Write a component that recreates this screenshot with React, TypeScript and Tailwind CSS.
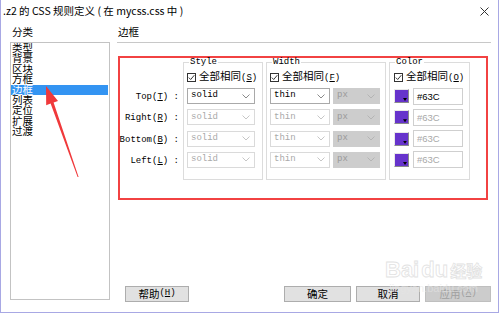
const MONO = "font-['Liberation_Mono','Noto_Sans_CJK_SC',monospace]";

const categories = ["类型", "背景", "区块", "方框", "边框", "列表", "定位", "扩展", "过渡"];

const sides = [
  { name: "Top", key: "T", on: true },
  { name: "Right", key: "R", on: false },
  { name: "Bottom", key: "B", on: false },
  { name: "Left", key: "L", on: false },
];

function Chevron({ color }: { color: string }) {
  return (
    <svg width="8" height="5" viewBox="0 0 8 5">
      <polyline points="0.5,0.5 4,4 7.5,0.5" fill="none" stroke={color} strokeWidth="1" />
    </svg>
  );
}

function Select({ text, w, on, grey }: { text: string; w: string; on: boolean; grey?: boolean }) {
  const box = grey
    ? "bg-[#cdcdcd] border-[#cdcdcd] text-[#9a9a9a]"
    : on
      ? "bg-white border-[#a9a9a9] text-black"
      : "bg-white border-[#dadada] text-[#a9a9a9]";
  return (
    <div className={`${w} ${box} h-[16px] border flex items-center justify-between pl-[3px] pr-[4px] text-[9px] ${MONO}`}>
      <span>{text}</span>
      <Chevron color={grey ? "#b4b4b4" : on ? "#8a8a8a" : "#c6c6c6"} />
    </div>
  );
}

function Check({ label, k }: { label: string; k: string }) {
  return (
    <div className="flex items-center h-[14px] gap-[3px] whitespace-nowrap">
      <div className="w-[9px] h-[9px] shrink-0 border border-[#333] bg-white flex items-center justify-center">
        <svg width="7" height="7" viewBox="0 0 7 7">
          <polyline points="0.8,3.6 2.7,5.5 6.3,1.2" fill="none" stroke="#222" strokeWidth="0.9" />
        </svg>
      </div>
      <span className="text-[10.5px] leading-[14px]">
        {label}
        <span className={`${MONO} text-[9px]`}>
          (<u>{k}</u>)
        </span>
      </span>
    </div>
  );
}

function Group({ title, w, children }: { title: string; w: string; children: React.ReactNode }) {
  return (
    <fieldset className={`${w} h-[122px] border border-[#dcdcdc] pl-[3px]`}>
      <legend className={`ml-[2px] px-[1px] text-[9px] leading-[8px] ${MONO}`}>{title}</legend>
      <div className="pt-[4px]">{children}</div>
    </fieldset>
  );
}

function Swatch() {
  return (
    <div className="relative w-[15px] h-[14px] border-t border-l border-[#e8e8e8] border-r border-b border-r-[#8a8a8a] border-b-[#8a8a8a] bg-[#6633cc]">
      <div className="absolute right-[1px] bottom-[1px] w-[4px] h-[3px] bg-black [clip-path:polygon(0_0,100%_0,50%_100%)]" />
    </div>
  );
}

function Button({ text, k, w, off }: { text: string; k?: string; w: string; off?: boolean }) {
  return (
    <div
      className={`${w} h-[16px] border flex items-center justify-center text-[10.5px] ${
        off ? "bg-[#cccccc] border-[#bfbfbf] text-[#a0a0a0]" : "bg-[#e1e1e1] border-[#adadad] text-black"
      }`}
    >
      {text}
      {k && (
        <span className={`${MONO} text-[9px]`}>
          (<u>{k}</u>)
        </span>
      )}
    </div>
  );
}

export default function App() {
  return (
    <div className="relative w-[499px] h-[313px] bg-white border-l border-r border-b border-[#a8a8e4] flex flex-col text-black font-['Noto_Sans_CJK_SC',sans-serif]">
      {/* title bar */}
      <div className="h-[22px] flex items-center justify-between pl-[2px] pr-[9px]">
        <span className="text-[10.5px]">.z2 的 CSS 规则定义 ( 在 mycss.css 中 )</span>
        <svg width="9" height="9" viewBox="0 0 9 9">
          <path d="M0.5 0.5 L8.5 8.5 M8.5 0.5 L0.5 8.5" stroke="#333" strokeWidth="1" />
        </svg>
      </div>

      <div className="flex-1 flex pl-[9px] gap-[7px]">
        {/* category list */}
        <div className="w-[100px] flex flex-col">
          <div className="h-[20px] pl-[2px] text-[10.5px] leading-[20px]">分类</div>
          <div className="h-[258px] border border-[#c3c3c3]">
            {categories.map((c) => (
              <div
                key={c}
                className={`h-[10.4px] leading-[10.4px] pl-[1px] mr-[1px] text-[10.5px] ${
                  c === "边框" ? "bg-[#3394f2] text-white" : ""
                }`}
              >
                {c}
              </div>
            ))}
          </div>
        </div>

        {/* border page */}
        <div className="w-[374px] flex flex-col">
          <div className="h-[21px] border-b border-[#c8c8c8] pl-[1px] text-[10.5px] leading-[20px]">边框</div>

          <div className="mt-[13px] ml-[1px] w-[370px] h-[144px] border-2 border-[#f24242] flex">
            <div className={`w-[63px] pt-[31px] pr-[4px] flex flex-col gap-[5.33px] items-end text-[9px] ${MONO}`}>
              {sides.map((s) => (
                <div key={s.name} className="h-[16px] leading-[16px] whitespace-pre">
                  {s.name}(<u>{s.key}</u>) :
                </div>
              ))}
            </div>

            <div className="flex gap-[3px]">
              <Group title="Style" w="w-[80px]">
                <Check label="全部相同" k="S" />
                <div className="mt-[4px] flex flex-col gap-[5.33px]">
                  {sides.map((s) => (
                    <Select key={s.name} text="solid" w="w-[68px]" on={s.on} />
                  ))}
                </div>
              </Group>

              <Group title="Width" w="w-[120px]">
                <Check label="全部相同" k="F" />
                <div className="mt-[4px] flex flex-col gap-[5.33px]">
                  {sides.map((s) => (
                    <div key={s.name} className="flex gap-[3px]">
                      <Select text="thin" w="w-[60px]" on={s.on} />
                      <Select text="px" w="w-[47px]" on={false} grey />
                    </div>
                  ))}
                </div>
              </Group>

              <Group title="Color" w="w-[81px]">
                <div className="pl-[1px]">
                  <Check label="全部相同" k="O" />
                </div>
                <div className="mt-[4px] flex flex-col gap-[5.33px] pl-[1px]">
                  {sides.map((s) => (
                    <div key={s.name} className="h-[16px] flex items-center gap-[4px]">
                      <Swatch />
                      <div
                        className={`w-[50px] h-[17px] border border-[#cfcfcf] bg-white pl-[3px] text-[9.5px] leading-[15px] font-['Liberation_Sans',sans-serif] ${
                          s.on ? "text-black" : "text-[#a8a8a8]"
                        }`}
                      >
                        #63C
                      </div>
                    </div>
                  ))}
                </div>
              </Group>
            </div>
          </div>

          <div className="mt-auto mb-[10px] pl-[8px] flex justify-between">
            <Button text="帮助" k="H" w="w-[64px]" />
            <div className="flex gap-[5px]">
              <Button text="确定" w="w-[67px]" />
              <Button text="取消" w="w-[64px]" />
              <Button text="应用" k="A" w="w-[66px]" off />
            </div>
          </div>
        </div>
      </div>

      {/* annotation arrow */}
      <svg className="absolute left-0 top-0 pointer-events-none" width="499" height="313" viewBox="0 0 499 313">
        <polygon
          points="45,86 57,101 52.6,102.6 77.6,177 76.6,177 49.6,103.6 45.2,105.2"
          fill="#f0393b"
        />
      </svg>

      {/* watermark */}
      <div className="absolute left-[384px] top-[258px] flex flex-col items-center pointer-events-none opacity-60">
        <div className="flex items-end gap-[2px] text-[22px] leading-[24px] font-bold text-white [-webkit-text-stroke:0.8px_#cfcfcf] font-['Liberation_Sans',sans-serif]">
          <span>Bai</span>
          <span>du</span>
          <span className="text-[16px] font-['Noto_Sans_CJK_SC',sans-serif]">经验</span>
        </div>
        <div className="text-[11px] leading-[12px] text-[#e6e6e6] font-['Liberation_Sans',sans-serif]">jingyan.baidu.com</div>
      </div>
    </div>
  );
}
